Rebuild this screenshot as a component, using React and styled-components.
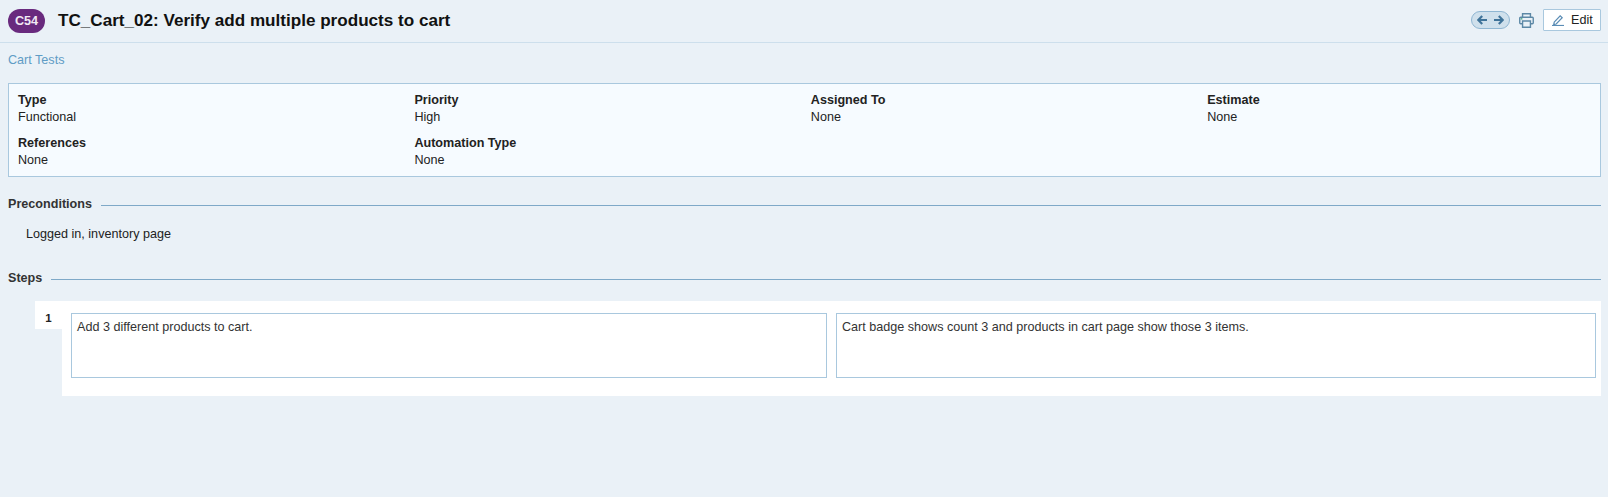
import React from "react";
import styled, { createGlobalStyle } from "styled-components";

const GlobalStyle = createGlobalStyle`
  html, body {
    margin: 0;
    padding: 0;
    background: #eaf1f7;
  }
  body {
    font-family: "Liberation Sans", Arial, sans-serif;
    font-size: 12.6px;
    color: #222;
    height: 497px;
    overflow: hidden;
  }
`;

const fields = [
  { label: "Type", value: "Functional" },
  { label: "Priority", value: "High" },
  { label: "Assigned To", value: "None" },
  { label: "Estimate", value: "None" },
  { label: "References", value: "None" },
  { label: "Automation Type", value: "None" },
];

export default function App() {
  return (
    <Page>
      <GlobalStyle />
      <Header>
        <Badge>C54</Badge>
        <Title>TC_Cart_02: Verify add multiple products to cart</Title>
        <Actions>
          <NavPill>
            <svg width="10" height="10" viewBox="0 0 10 10" fill="none" stroke="#3f7399" strokeWidth="2.2" strokeLinejoin="miter">
              <path d="M10 5H1.5M5.2 1L1.2 5l4 4" />
            </svg>
            <svg width="10" height="10" viewBox="0 0 10 10" fill="none" stroke="#3f7399" strokeWidth="2.2" strokeLinejoin="miter">
              <path d="M0 5h8.5M4.8 1l4 4-4 4" />
            </svg>
          </NavPill>
          <PrintIcon width="15" height="15" viewBox="0 0 16 16" fill="none" stroke="#5c88a6" strokeWidth="1.5">
            <path d="M3.8 4.5V.8h8.4v3.700" />
            <path d="M3.500 11.500H1.800a1 1 0 0 1-1-1V5.500a1 1 0 0 1 1-1h12.400a1 1 0 0 1 1 1v5a1 1 0 0 1-1 1h-1.700" />
            <path d="M3.800 8.500h8.400v6.700H3.800z" />
            <rect x="2" y="5.600" width="1.600" height="1.300" fill="#2fa36b" stroke="none" />
          </PrintIcon>
          <EditButton>
            <svg width="12" height="11" viewBox="0 0 12 11" fill="none" stroke="#5b8db5" strokeWidth="1.200">
              <path d="M2.200 7.200L8.200.8l2 1.900-6 6.300-2.500.6z" />
              <path d="M0 10.500h12" />
            </svg>
            Edit
          </EditButton>
        </Actions>
      </Header>

      <Content>
        <Breadcrumb>Cart Tests</Breadcrumb>

        <InfoBox>
          {fields.map(({ label, value }) => (
            <Field key={label}>
              <FieldLabel>{label}</FieldLabel>
              <div>{value}</div>
            </Field>
          ))}
        </InfoBox>

        <Section $top={19}>
          <SectionTitle>Preconditions</SectionTitle>
          <SectionRule />
        </Section>
        <Preconditions>Logged in, inventory page</Preconditions>

        <Section $top={27}>
          <SectionTitle>Steps</SectionTitle>
          <SectionRule />
        </Section>

        <StepRow>
          <StepNumber>1</StepNumber>
          <StepBody>
            <StepBox>Add 3 different products to cart.</StepBox>
            <StepBox>Cart badge shows count 3 and products in cart page show those 3 items.</StepBox>
          </StepBody>
        </StepRow>
      </Content>
    </Page>
  );
}

const Page = styled.div`
  width: 1608px;
`;

const Header = styled.header`
  display: flex;
  align-items: center;
  height: 42px;
  padding: 0 7px 0 8px;
  border-bottom: 1px solid #cddfec;
`;

const Badge = styled.span`
  display: flex;
  align-items: center;
  justify-content: center;
  width: 37px;
  height: 24px;
  border-radius: 12px;
  background: #692a7e;
  color: #f1e9f4;
  font-size: 12.6px;
  font-weight: 700;
`;

const Title = styled.h1`
  margin: 0 0 0 13px;
  font-size: 17.1px;
  font-weight: 700;
  color: #111;
`;

const Actions = styled.div`
  display: flex;
  align-items: center;
  margin-left: auto;
  padding-bottom: 2px;
`;

const NavPill = styled.div`
  display: flex;
  align-items: center;
  justify-content: center;
  gap: 7px;
  box-sizing: border-box;
  width: 39px;
  height: 18px;
  border: 1px solid #8fb6d2;
  border-radius: 9px;
  background: #cfe0ec;
`;

const PrintIcon = styled.svg`
  margin-left: 9px;
`;

const EditButton = styled.button`
  display: flex;
  align-items: center;
  gap: 7px;
  box-sizing: border-box;
  width: 58px;
  height: 22px;
  margin-left: 9px;
  padding: 0 0 0 8px;
  border: 1px solid #a9c8de;
  border-radius: 1px;
  background: #fff;
  color: #222;
  font-family: inherit;
  font-size: 12.6px;
`;

const Content = styled.main`
  padding: 0 7px 0 8px;
`;

const Breadcrumb = styled.div`
  margin-top: 10px;
  height: 15px;
  line-height: 15px;
  color: #5f9cc5;
`;

const InfoBox = styled.section`
  display: grid;
  grid-template-columns: repeat(4, 396.4px);
  grid-auto-rows: 43px;
  box-sizing: border-box;
  height: 94px;
  margin-top: 15px;
  padding: 8px 0 0 9px;
  border: 1px solid #a9c8de;
  background: #f6fbff;
  line-height: 16.5px;
`;

const Field = styled.div``;

const FieldLabel = styled.div`
  font-weight: 700;
`;

const Section = styled.div`
  display: flex;
  align-items: center;
  gap: 9px;
  margin-top: ${({ $top }) => $top}px;
  height: 16px;
`;

const SectionTitle = styled.h2`
  margin: 0;
  font-size: 12.6px;
  font-weight: 700;
  color: #333;
`;

const SectionRule = styled.div`
  flex: 1;
  height: 1px;
  margin-top: 3px;
  background: #7fa9c8;
`;

const Preconditions = styled.div`
  margin-top: 14px;
  padding-left: 18px;
  height: 17px;
  line-height: 17px;
`;

const StepRow = styled.div`
  display: flex;
  align-items: flex-start;
  margin: 15px 0 0 27px;
`;

const StepNumber = styled.div`
  box-sizing: border-box;
  width: 27px;
  height: 28px;
  padding-top: 11px;
  background: #fff;
  text-align: center;
  font-size: 11.5px;
  line-height: 13px;
  font-weight: 700;
`;

const StepBody = styled.div`
  flex: 1;
  display: grid;
  grid-template-columns: 756px 1fr;
  gap: 9px;
  box-sizing: border-box;
  height: 95px;
  padding: 12px 5px 18px 9px;
  background: #fff;
`;

const StepBox = styled.div`
  box-sizing: border-box;
  padding: 5px;
  border: 1px solid #a9c8de;
  line-height: 16px;
  color: #333;
`;
